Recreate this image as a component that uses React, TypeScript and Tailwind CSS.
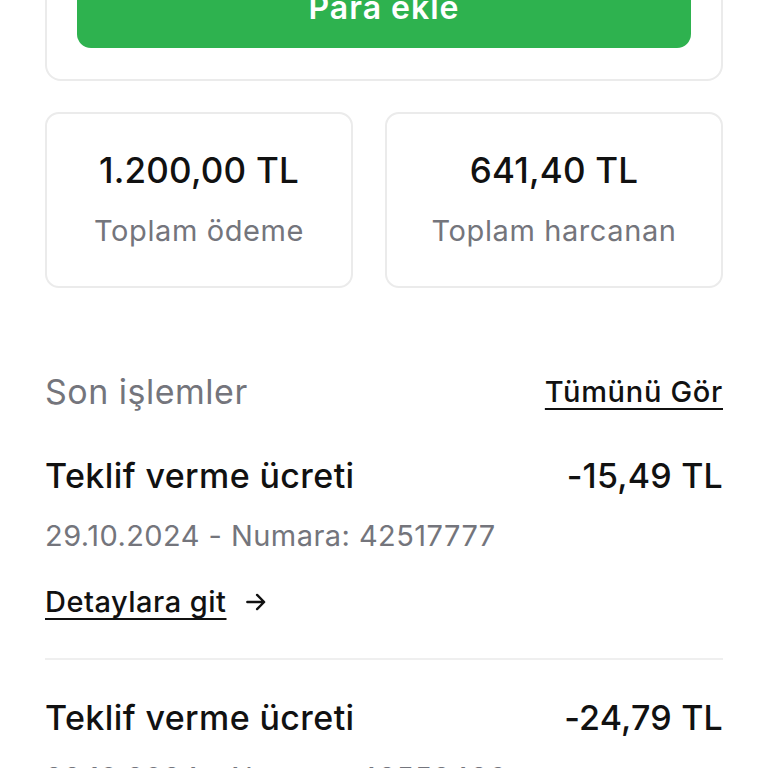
import React from 'react'

const transactions = [
  { id: 1, title: 'Teklif verme ücreti', amount: '-15,49 TL', date: '29.10.2024', no: '42517777' },
  { id: 2, title: 'Teklif verme ücreti', amount: '-24,79 TL', date: '28.10.2024', no: '42558486' }
]

const ArrowRight = () => (
  <svg className="h-[26px] w-[26px]" viewBox="0 0 24 24" fill="none" stroke="currentColor">
    <path strokeWidth={2.2} strokeLinecap="round" strokeLinejoin="round" d="M4 12h15M13 5.5l6.5 6.5-6.5 6.5" />
  </svg>
)

const App = () => {
  return (
    <div
      className="h-[768px] w-[768px] overflow-hidden bg-white px-[45px] text-[#111111]"
      style={{ fontFamily: 'Inter, "Noto Sans", sans-serif' }}
    >
      {/* Balance card (scrolled) */}
      <div className="mt-[-60px] rounded-[16px] border-2 border-[#ebebeb] px-[30px] pb-[31px] pt-[26px]">
        <button className="flex h-[80px] w-full items-center justify-center rounded-[14px] bg-[#2eb24f] text-[32px] font-semibold tracking-[1px] text-white">
          Para ekle
        </button>
      </div>

      {/* Totals */}
      <div className="mt-[31px] grid grid-cols-[308px_1fr] gap-[32px]">
        <div className="flex h-[176px] flex-col items-center justify-center rounded-[14px] border-2 border-[#ebebeb]">
          <p className="text-[35px] font-medium leading-[40px] tracking-[0.2px]">1.200,00 TL</p>
          <p className="mt-[21px] text-[29px] leading-[40px] tracking-[0.6px] text-[#74757c]">Toplam ödeme</p>
        </div>
        <div className="flex h-[176px] flex-col items-center justify-center rounded-[14px] border-2 border-[#ebebeb]">
          <p className="text-[35px] font-medium leading-[40px] tracking-[0.2px]">641,40 TL</p>
          <p className="mt-[21px] text-[29px] leading-[40px] tracking-[0.6px] text-[#74757c]">Toplam harcanan</p>
        </div>
      </div>

      {/* Recent transactions */}
      <div className="mt-[82px] flex items-center justify-between">
        <h2 className="text-[34px] leading-[44px] tracking-[0.5px] text-[#74757c]">Son işlemler</h2>
        <a className="text-[29px] font-medium leading-[40px] tracking-[0.7px] underline underline-offset-[6px]">Tümünü Gör</a>
      </div>

      <div className="mt-[40px]">
        {transactions.map((t, i) => (
          <div key={t.id} className={i === 0 ? 'border-b-2 border-[#efefef] pb-[36px]' : 'pt-[36px]'}>
            <div className="flex items-center justify-between">
              <p className="text-[34px] font-medium leading-[44px] tracking-[0.4px]">{t.title}</p>
              <p className="text-[34px] font-medium leading-[44px] tracking-[0.2px]">{t.amount}</p>
            </div>
            <p className="mt-[18px] text-[29px] leading-[40px] tracking-[0.45px] text-[#74757c]">
              {t.date} - Numara: {t.no}
            </p>
            <a className="mt-[26px] flex items-center gap-[16px] text-[29px] font-medium leading-[40px] tracking-[0.5px]">
              <span className="underline underline-offset-[6px]">Detaylara git</span>
              <ArrowRight />
            </a>
          </div>
        ))}
      </div>
    </div>
  )
}

export default App
